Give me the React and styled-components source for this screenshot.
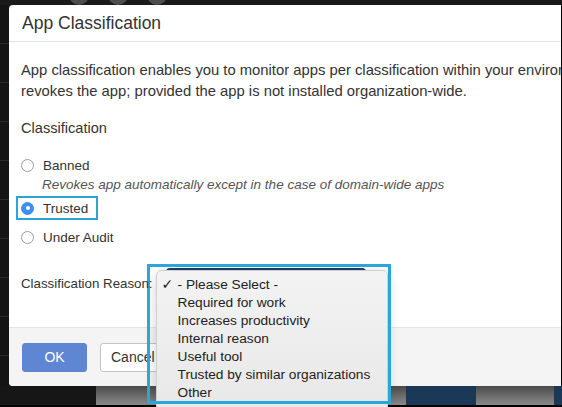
import React from "react";
import styled, { createGlobalStyle } from "styled-components";

const GlobalStyle = createGlobalStyle`
  html, body {
    margin: 0;
    padding: 0;
    background: #1a1a1a;
    overflow: hidden;
  }
  * {
    box-sizing: border-box;
  }
`;

const reasons = [
  "- Please Select -",
  "Required for work",
  "Increases productivity",
  "Internal reason",
  "Useful tool",
  "Trusted by similar organizations",
  "Other",
];

const options = [
  { label: "Banned", hint: "Revokes app automatically except in the case of domain-wide apps" },
  { label: "Trusted", checked: true, marked: true },
  { label: "Under Audit" },
];

const Radio = ({ label, checked, marked }) => {
  return (
    <RadioRow $marked={marked}>
      <Circle $checked={checked} />
      <span>{label}</span>
    </RadioRow>
  );
};

const App = () => {
  return (
    <>
      <GlobalStyle />
      <Page>
        <TopBar>
          <Dot />
          <Dot />
          <Dot />
        </TopBar>
        <Middle>
          <Gutter />
          <Modal>
            <Header>App Classification</Header>
            <Body>
              <Intro>
                App classification enables you to monitor apps per classification within your environment. Banning
                <br />
                revokes the app; provided the app is not installed organization-wide.
              </Intro>
              <Label>Classification</Label>
              <Options>
                {options.map((o) => (
                  <OptionBlock key={o.label} $marked={o.marked}>
                    <Radio label={o.label} checked={o.checked} marked={o.marked} />
                    {o.hint && <Hint>{o.hint}</Hint>}
                  </OptionBlock>
                ))}
              </Options>
              <ReasonRow>
                <ReasonLabel>Classification Reason:</ReasonLabel>
                <SelectWrap>
                  <SelectBox />
                  <Marker />
                  <Menu>
                    {reasons.map((r, i) => (
                      <MenuItem key={r}>
                        <Check>{i === 0 ? "✓" : ""}</Check>
                        {r}
                      </MenuItem>
                    ))}
                  </Menu>
                </SelectWrap>
              </ReasonRow>
            </Body>
            <Footer>
              <Button $primary>OK</Button>
              <Button>Cancel</Button>
            </Footer>
          </Modal>
          <Edge />
        </Middle>
        <BottomBar>
          <Strip $w={96} $c="#161616" />
          <Strip $w={310} $c="linear-gradient(#4a4a4a, #8a8a8a)" />
          <Strip $w={70} $c="#1c3857" />
          <Strip $w={78} $c="linear-gradient(#4a4a4a, #8a8a8a)" />
          <Strip $w={8} $c="#1c3857" />
        </BottomBar>
        <BottomLine />
      </Page>
    </>
  );
};

export default App;

const Page = styled.div`
  width: 562px;
  height: 407px;
  display: flex;
  flex-direction: column;
  background: #1a1a1a;
  font-family: "Liberation Sans", Arial, sans-serif;
  color: #333;
  overflow: hidden;
`;

const TopBar = styled.div`
  height: 5px;
  display: flex;
  align-items: flex-end;
  gap: 19px;
  padding-left: 69px;
  overflow: hidden;
  flex-shrink: 0;
`;

const Dot = styled.div`
  width: 20px;
  height: 20px;
  flex-shrink: 0;
  border-radius: 50%;
  background: #4d4d4d;
`;

const Middle = styled.div`
  display: flex;
  height: 381px;
  flex-shrink: 0;
`;

const Gutter = styled.div`
  width: 9px;
  background: repeating-linear-gradient(#141414 0 38px, #2a2a2a 38px 39px);
`;

const Edge = styled.div`
  width: 1px;
  background: #000;
  position: relative;
  z-index: 3;
`;

const Modal = styled.div`
  width: 552px;
  display: flex;
  flex-direction: column;
  background: #fff;
  border-radius: 4px 0 0 4px;
`;

const Header = styled.div`
  height: 37px;
  padding: 8px 13px 0;
  font-size: 17.5px;
  color: #333;
  border-bottom: 1px solid #e5e5e5;
  flex-shrink: 0;
`;

const Body = styled.div`
  flex: 1;
  padding: 18px 0 0 12px;
  display: flex;
  flex-direction: column;
`;

const Intro = styled.p`
  margin: 0;
  font-size: 14.8px;
  line-height: 21px;
  white-space: nowrap;
  overflow: hidden;
`;

const Label = styled.div`
  margin-top: 16px;
  font-size: 14.6px;
  line-height: 21px;
`;

const Options = styled.div`
  margin-top: 16px;
  display: flex;
  flex-direction: column;
  gap: 5px;
`;

const OptionBlock = styled.div`
  display: flex;
  flex-direction: column;
  align-items: flex-start;
  margin-bottom: ${(p) => (p.$marked ? "4px" : "0")};
`;

const RadioRow = styled.div`
  display: flex;
  align-items: center;
  gap: 9px;
  height: 20px;
  font-size: 13.5px;
  color: #333;
  ${(p) =>
    p.$marked &&
    `outline: 2px solid #2fa3d8; margin-left: -3px; padding: 0 8px 0 3px;`}
`;

const Circle = styled.span`
  width: 13px;
  height: 13px;
  border-radius: 50%;
  flex-shrink: 0;
  background: ${(p) => (p.$checked ? "#3d8ef5" : "#fff")};
  border: 1px solid ${(p) => (p.$checked ? "#3d8ef5" : "#9b9b9b")};
  display: flex;
  align-items: center;
  justify-content: center;

  &::after {
    content: "";
    display: ${(p) => (p.$checked ? "block" : "none")};
    width: 4px;
    height: 4px;
    border-radius: 50%;
    background: #fff;
  }
`;

const Hint = styled.div`
  margin: 2px 0 0 21px;
  font-size: 13.5px;
  font-style: italic;
  color: #555;
  line-height: 16px;
`;

const ReasonRow = styled.div`
  margin-top: 21px;
  display: flex;
  align-items: center;
  gap: 13px;
  font-size: 13.3px;
  color: #333;
`;

const ReasonLabel = styled.span`
  position: relative;
  z-index: 3;
`;

const SelectWrap = styled.div`
  position: relative;
`;

const SelectBox = styled.div`
  width: 200px;
  height: 30px;
  border: 2px solid #1b3f6b;
  border-radius: 4px;
  background: #fff;
`;

const Marker = styled.div`
  position: absolute;
  left: -19px;
  top: -4px;
  width: 244px;
  height: 140px;
  border: 3px solid #2aa6dc;
  z-index: 2;
  pointer-events: none;
`;

const Menu = styled.div`
  position: absolute;
  left: -10px;
  top: 2px;
  width: 232px;
  padding: 4px 0 20px;
  background: linear-gradient(#f3f3f3, #e7e7e7);
  border: 1px solid #d0d0d0;
  border-radius: 5px;
  box-shadow: 0 4px 14px rgba(0, 0, 0, 0.18);
  z-index: 1;
`;

const MenuItem = styled.div`
  display: flex;
  align-items: center;
  height: 18px;
  font-size: 13.7px;
  color: #222;
  white-space: nowrap;
`;

const Check = styled.span`
  width: 21px;
  padding-left: 5px;
  font-size: 14px;
  font-weight: bold;
  font-family: "DejaVu Sans", sans-serif;
`;

const Footer = styled.div`
  height: 59px;
  flex-shrink: 0;
  background: #f4f4f4;
  border-top: 1px solid #e6e6e6;
  border-radius: 0 0 0 4px;
  display: flex;
  align-items: center;
  gap: 13px;
  padding: 0 13px;
`;

const Button = styled.button`
  height: 29px;
  width: ${(p) => (p.$primary ? "65px" : "80px")};
  border-radius: 3px;
  font-family: inherit;
  font-size: 14px;
  text-align: ${(p) => (p.$primary ? "center" : "left")};
  padding: ${(p) => (p.$primary ? "0" : "0 10px")};
  color: ${(p) => (p.$primary ? "#fff" : "#333")};
  background: ${(p) => (p.$primary ? "#5f86d3" : "#fff")};
  border: 1px solid ${(p) => (p.$primary ? "#5f86d3" : "#c4c4c4")};
`;

const BottomBar = styled.div`
  height: 19px;
  display: flex;
  flex-shrink: 0;
`;

const Strip = styled.div`
  width: ${(p) => p.$w}px;
  background: ${(p) => p.$c};
  flex-shrink: 0;
`;

const BottomLine = styled.div`
  height: 2px;
  background: #000;
`;
